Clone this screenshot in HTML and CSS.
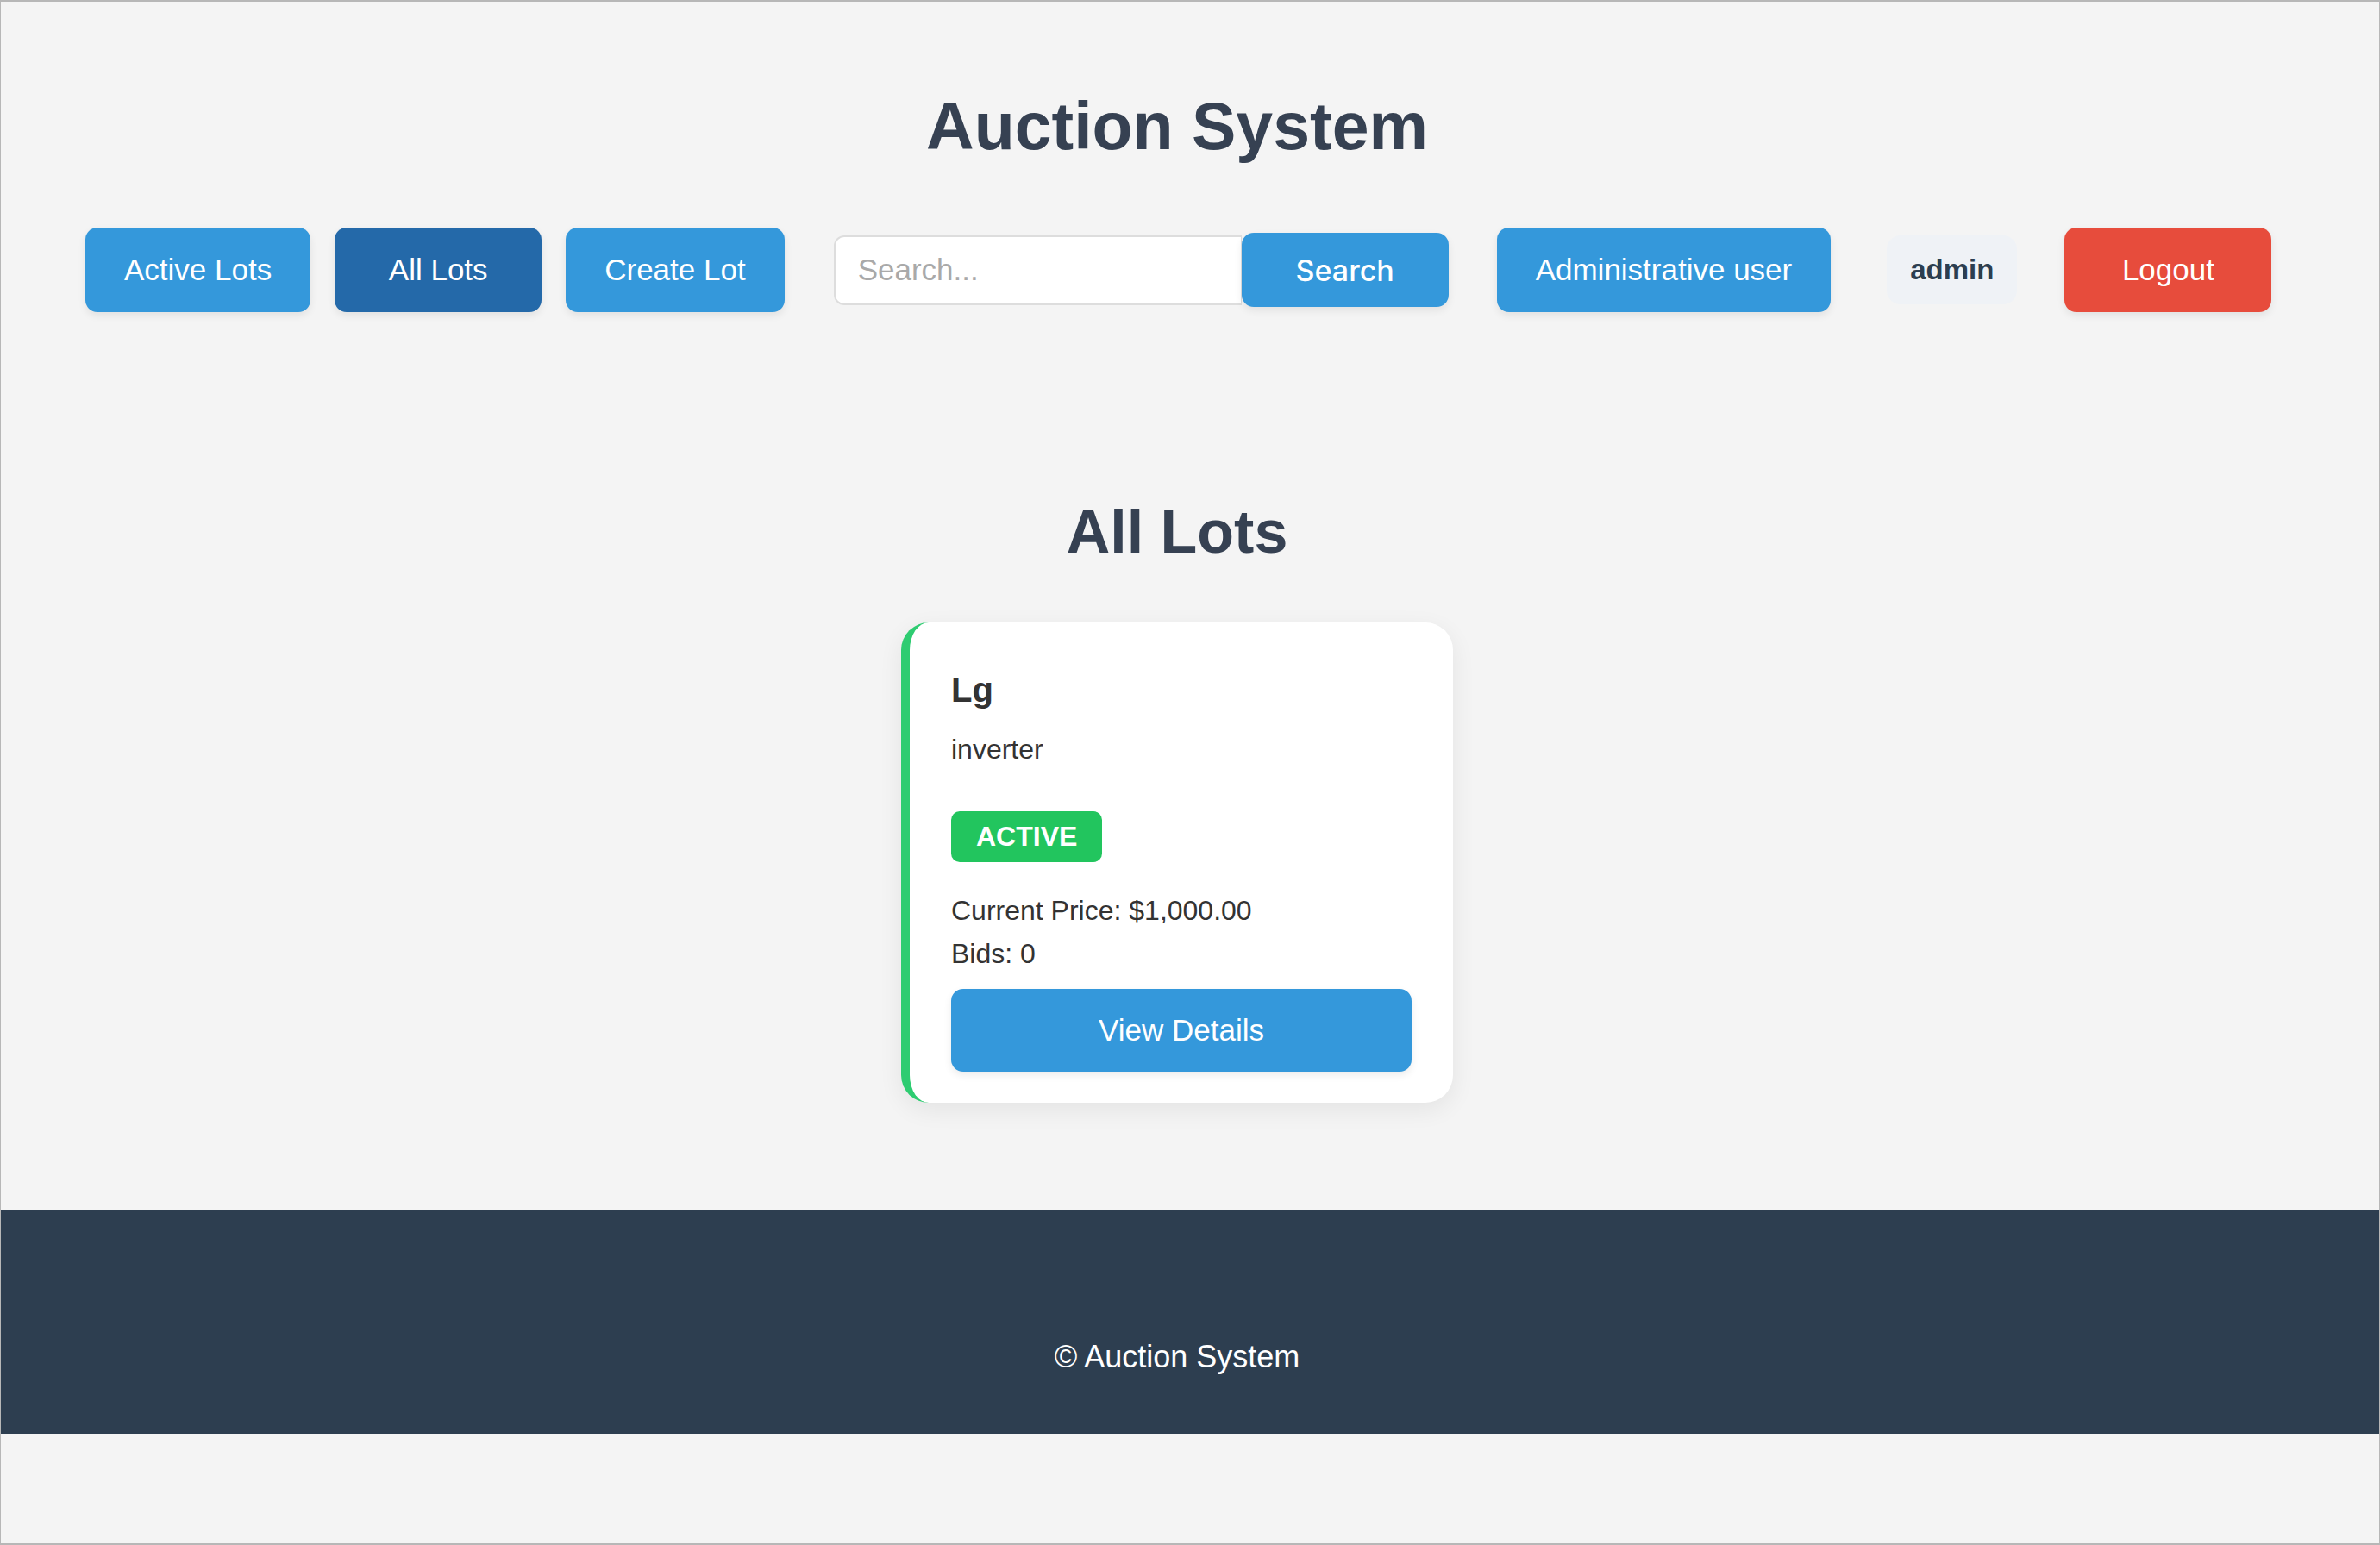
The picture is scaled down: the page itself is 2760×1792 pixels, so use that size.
FILE: index.html
```html
<!DOCTYPE html>
<html lang="en">
<head>
<meta charset="utf-8">
<title>Auction System</title>
<link rel="stylesheet" href="styles.css">
</head>
<body>
<div class="frame">
  <header class="site-header">
    <h1 class="site-title">Auction System</h1>
    <nav class="nav">
      <div class="nav-links">
        <a class="btn" href="#">Active Lots</a>
        <a class="btn btn-current" href="#">All Lots</a>
        <a class="btn" href="#">Create Lot</a>
      </div>
      <form class="search-form">
        <input class="search-input" type="text" placeholder="Search...">
        <button class="search-btn" type="button">Search</button>
      </form>
      <div class="user-area">
        <a class="btn" href="#">Administrative user</a>
        <span class="user-name">admin</span>
        <a class="btn btn-danger" href="#">Logout</a>
      </div>
    </nav>
  </header>

  <main class="content">
    <h2 class="section-title">All Lots</h2>
    <div class="lots">
      <article class="lot-card">
        <h3 class="lot-title">Lg</h3>
        <p class="lot-desc">inverter</p>
        <span class="status status-active">ACTIVE</span>
        <p class="lot-line">Current Price: $1,000.00</p>
        <p class="lot-line">Bids: 0</p>
        <a class="details-btn" href="#">View Details</a>
      </article>
    </div>
  </main>

  <footer class="site-footer">
    <p class="footer-text">© Auction System</p>
  </footer>
</div>
</body>
</html>
```

FILE: styles.css
```css
* { box-sizing: border-box; }

html, body {
  margin: 0;
  padding: 0;
}

body {
  font-family: "Liberation Sans", Arial, Helvetica, sans-serif;
  background: #f4f4f4;
}

.frame {
  width: 2760px;
  height: 1792px;
  border: 2px solid #b7b7b7;
  border-left-width: 1px;
  border-right-width: 1px;
  background: #f4f4f4;
  overflow: hidden;
}

/* Header */
.site-header {
  padding-right: 30px;
}

.site-title {
  margin: 100px 0 0;
  font-size: 77px;
  line-height: 88px;
  font-weight: 700;
  color: #364152;
  text-align: center;
}

.nav {
  margin-top: 74px;
  padding-left: 98px;
  display: flex;
  align-items: center;
  gap: 57px;
  height: 98px;
}

.nav-links {
  display: flex;
  align-items: center;
  gap: 28px;
}

.btn {
  display: inline-flex;
  align-items: center;
  justify-content: center;
  height: 98px;
  min-width: 240px;
  padding: 0 45px;
  border-radius: 14px;
  background: #3498db;
  color: #ffffff;
  font-size: 35px;
  text-decoration: none;
  white-space: nowrap;
  box-shadow: 0 4px 10px rgba(0, 0, 0, 0.08);
}

.btn-current {
  background: #2469a9;
}

.btn-danger {
  background: #e74c3c;
}

.search-form {
  display: flex;
  align-items: center;
  margin: 0;
}

.search-input {
  width: 473px;
  height: 81px;
  margin: 0;
  padding: 0 26px;
  border: 2px solid #dddddd;
  border-right-width: 1px;
  border-radius: 12px 0 0 12px;
  background: #ffffff;
  font-family: "Liberation Sans", Arial, sans-serif;
  font-size: 35px;
  color: #333333;
  outline: none;
}

.search-input::placeholder {
  color: #a9a9a9;
}

.search-btn {
  width: 240px;
  height: 86px;
  margin: 0;
  border: none;
  border-radius: 14px;
  background: #3498db;
  color: #ffffff;
  font-family: Inter, "Liberation Sans", sans-serif;
  font-size: 34px;
  font-weight: 500;
  box-shadow: 0 4px 10px rgba(0, 0, 0, 0.08);
}

.user-area {
  display: flex;
  align-items: center;
  margin-left: -1px;
}

.user-name {
  display: inline-flex;
  align-items: center;
  height: 80px;
  margin: 0 55px 0 65px;
  padding: 0 27px;
  border-radius: 16px;
  background: #eff2f6;
  color: #2c3e50;
  font-size: 33px;
  font-weight: 700;
}

/* Content */
.content {
  padding-right: 30px;
}

.section-title {
  margin: 215px 0 0;
  font-size: 70px;
  line-height: 80px;
  font-weight: 700;
  color: #364152;
  text-align: center;
}

.lots {
  margin-top: 65px;
  display: flex;
  justify-content: center;
}

.lot-card {
  width: 640px;
  padding: 55px 48px 36px 48px;
  border-left: 10px solid #2ecc71;
  border-radius: 32px;
  background: #ffffff;
  box-shadow: 0 8px 28px rgba(0, 0, 0, 0.07);
  color: #333333;
}

.lot-title {
  margin: 0;
  font-size: 40px;
  line-height: 46px;
  font-weight: 700;
}

.lot-desc {
  margin: 28px 0 0;
  font-size: 32px;
  line-height: 37px;
}

.status {
  display: block;
  width: fit-content;
  margin-top: 53px;
  height: 59px;
  padding: 0 29px;
  border-radius: 10px;
  font-size: 32px;
  line-height: 59px;
  font-weight: 700;
  color: #ffffff;
}

.status-active {
  background: #22c55e;
}

.lot-line {
  margin: 0;
  font-size: 32px;
  line-height: 50px;
}

.status + .lot-line {
  margin-top: 31px;
}

.details-btn {
  display: flex;
  align-items: center;
  justify-content: center;
  margin-top: 16px;
  height: 96px;
  border-radius: 14px;
  background: #3498db;
  color: #ffffff;
  font-size: 35px;
  text-decoration: none;
  box-shadow: 0 4px 10px rgba(0, 0, 0, 0.08);
}

/* Footer */
.site-footer {
  margin-top: 124px;
  height: 260px;
  padding: 150px 30px 0 0;
  background: #2d3e50;
}

.footer-text {
  margin: 0;
  font-size: 36px;
  line-height: 41px;
  color: #ffffff;
  text-align: center;
}
```
